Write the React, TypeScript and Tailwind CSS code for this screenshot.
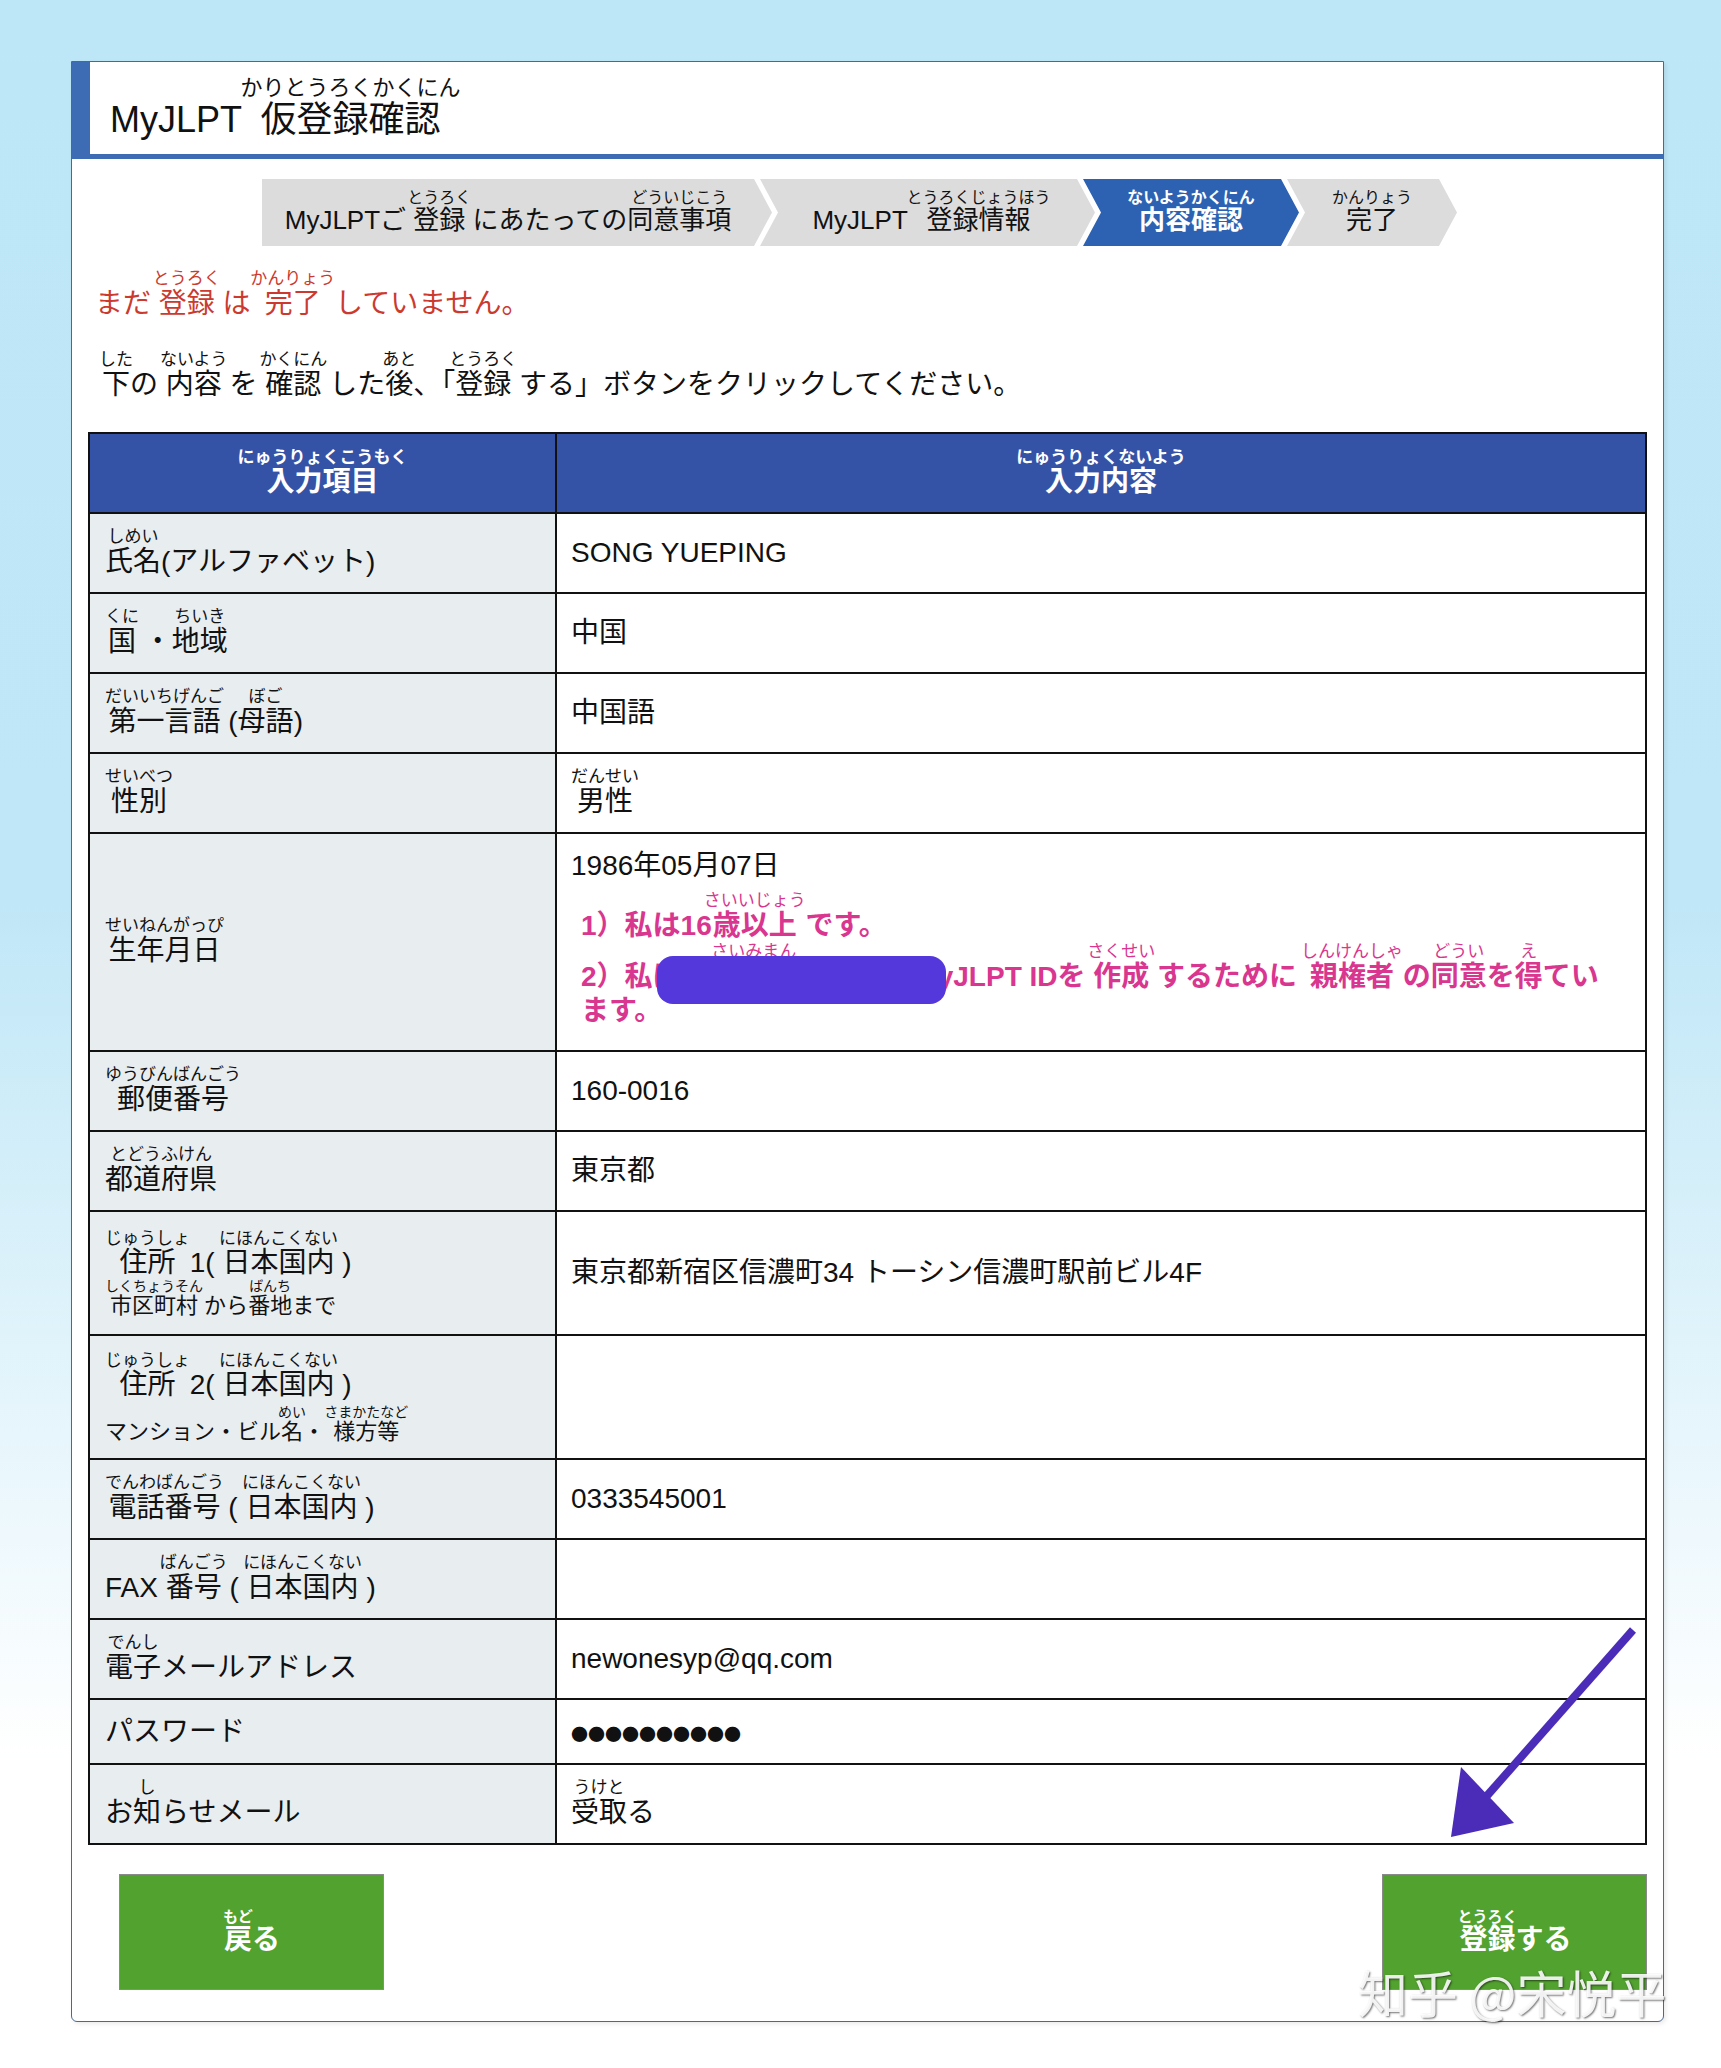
import React from 'react';

const R: React.FC<{ b: string; r: string; rc?: string }> = ({ b, r, rc }) => (
  <ruby className="[ruby-align:center]">
    <span className="inline-block">{b}</span>
    <rt className={rc ?? 'text-[17px] leading-none'}>{r}</rt>
  </ruby>
);

const LABEL = 'bg-[#e8edf0] border-2 border-[#111] pl-[15px] pr-2 align-middle text-[28px] leading-[1.2] text-[#111]';
const VALUE = 'bg-white border-2 border-[#111] pl-[14px] pr-2 align-middle text-[28px] leading-[1.2] text-[#111]';
const PR = 'text-[17px] leading-none font-normal';

const Row: React.FC<{ h: string; label: React.ReactNode; value?: React.ReactNode }> = ({ h, label, value }) => (
  <tr className={h}>
    <td className={LABEL}>{label}</td>
    <td className={VALUE}>{value}</td>
  </tr>
);

export default function App() {
  return (
    <div className="relative w-full min-h-[2068px] bg-[linear-gradient(to_bottom,#bde6f6_0px,#c0e7f7_900px,#ffffff_1760px)] font-['Liberation_Sans','Noto_Sans_CJK_JP',sans-serif] text-[#111]">
      <div className="pt-[61px] pl-[71px]">
        <div className="w-[1593px] h-[1961px] bg-white border border-[#4a6890] rounded-b-[6px] shadow-[2px_2px_4px_rgba(0,0,0,0.08)]">
          {/* title */}
          <div className="flex items-center h-[97px] border-l-[18px] border-b-[5px] border-[#3d6cb5] pl-[20px]">
            <h1 className="text-[36px] leading-[1.2] text-[#111]">
              MyJLPT <R b="仮登録確認" r="かりとうろくかくにん" rc="text-[22px] leading-none" />
            </h1>
          </div>

          {/* steps */}
          <div className="mt-[20px] ml-[190px] flex h-[67px] text-[26px] leading-[1.15]">
            <div className="w-[510px] bg-[#dcdcdc] flex items-center justify-center pr-[18px] [clip-path:polygon(0_0,calc(100%-18px)_0,100%_50%,calc(100%-18px)_100%,0_100%)]">
              <span>
                MyJLPTご <R b="登録" r="とうろく" rc="text-[16px] leading-none" /> にあたっての<R b="同意事項" r="どういじこう" rc="text-[16px] leading-none" />
              </span>
            </div>
            <div className="-ml-[12px] w-[335px] bg-[#dcdcdc] flex items-center justify-center pl-[8px] [clip-path:polygon(0_0,calc(100%-18px)_0,100%_50%,calc(100%-18px)_100%,0_100%,18px_50%)]">
              <span>
                MyJLPT <R b="登録情報" r="とうろくじょうほう" rc="text-[16px] leading-none" />
              </span>
            </div>
            <div className="-ml-[12px] w-[216px] bg-[#2d62b3] text-white font-bold flex items-center justify-center [clip-path:polygon(0_0,calc(100%-18px)_0,100%_50%,calc(100%-18px)_100%,0_100%,18px_50%)]">
              <R b="内容確認" r="ないようかくにん" rc="text-[16px] leading-none font-bold" />
            </div>
            <div className="-ml-[12px] w-[170px] bg-[#dcdcdc] flex items-center justify-center [clip-path:polygon(0_0,calc(100%-18px)_0,100%_50%,calc(100%-18px)_100%,0_100%,18px_50%)]">
              <R b="完了" r="かんりょう" rc="text-[16px] leading-none" />
            </div>
          </div>

          {/* messages */}
          <p className="ml-[23px] mt-[23px] text-[28px] leading-[1.2] text-[#cc3a2f]">
            まだ <R b="登録" r="とうろく" /> は <R b="完了" r="かんりょう" /> していません。
          </p>
          <p className="ml-[27px] mt-[29px] text-[28px] leading-[1.2]">
            <R b="下" r="した" />の <R b="内容" r="ないよう" /> を <R b="確認" r="かくにん" /> した
            <R b="後" r="あと" />、「<R b="登録" r="とうろく" /> する」ボタンをクリックしてください。
          </p>

          {/* table */}
          <table className="mt-[31px] ml-[16px] w-[1559px] border-collapse table-fixed">
            <colgroup>
              <col className="w-[467px]" />
              <col />
            </colgroup>
            <thead>
              <tr className="h-[80px]">
                <th className="bg-[#3553a6] border-2 border-[#111] text-white font-bold text-[28px] leading-[1.1]">
                  <R b="入力項目" r="にゅうりょくこうもく" rc="text-[17px] leading-none font-bold" />
                </th>
                <th className="bg-[#3553a6] border-2 border-[#111] text-white font-bold text-[28px] leading-[1.1]">
                  <R b="入力内容" r="にゅうりょくないよう" rc="text-[17px] leading-none font-bold" />
                </th>
              </tr>
            </thead>
            <tbody>
              <Row h="h-[80px]" label={<><R b="氏名" r="しめい" />(アルファベット)</>} value="SONG YUEPING" />
              <Row h="h-[80px]" label={<><R b="国" r="くに" /> ・<R b="地域" r="ちいき" /></>} value="中国" />
              <Row h="h-[80px]" label={<><R b="第一言語" r="だいいちげんご" /> (<R b="母語" r="ぼご" />)</>} value="中国語" />
              <Row h="h-[80px]" label={<R b="性別" r="せいべつ" />} value={<R b="男性" r="だんせい" />} />
              <tr className="h-[218px]">
                <td className={LABEL}>
                  <R b="生年月日" r="せいねんがっぴ" />
                </td>
                <td className={VALUE}>
                  <div className="pb-[8px]">
                    <div className="leading-[1.2]">1986年05月07日</div>
                    <div className="mt-[8px] ml-[10px] text-[#d9368f] font-bold leading-[1.2]">
                      <div>
                        1）私は16<R b="歳以上" r="さいいじょう" rc={PR} /> です。
                      </div>
                      <div>
                        2）私は16<R b="歳未満" r="さいみまん" rc={PR} /> なので、MyJLPT IDを <R b="作成" r="さくせい" rc={PR} /> するために{' '}
                        <R b="親権者" r="しんけんしゃ" rc={PR} /> の<R b="同意" r="どうい" rc={PR} />を<R b="得" r="え" rc={PR} />てい
                        <br />
                        ます。
                      </div>
                    </div>
                  </div>
                </td>
              </tr>
              <Row h="h-[80px]" label={<R b="郵便番号" r="ゆうびんばんごう" />} value="160-0016" />
              <Row h="h-[80px]" label={<R b="都道府県" r="とどうふけん" />} value="東京都" />
              <tr className="h-[124px]">
                <td className={LABEL}>
                  <div className="leading-[1.05]">
                    <R b="住所" r="じゅうしょ" /> 1( <R b="日本国内" r="にほんこくない" /> )
                  </div>
                  <div className="text-[22px] leading-[1.05]">
                    <R b="市区町村" r="しくちょうそん" rc="text-[14px] leading-none" /> から<R b="番地" r="ばんち" rc="text-[14px] leading-none" />まで
                  </div>
                </td>
                <td className={VALUE}>東京都新宿区信濃町34 トーシン信濃町駅前ビル4F</td>
              </tr>
              <tr className="h-[124px]">
                <td className={LABEL}>
                  <div className="leading-[1.05]">
                    <R b="住所" r="じゅうしょ" /> 2( <R b="日本国内" r="にほんこくない" /> )
                  </div>
                  <div className="text-[22px] leading-[1.05] mt-[4px]">
                    マンション・ビル<R b="名" r="めい" rc="text-[14px] leading-none" />・ <R b="様方等" r="さまかたなど" rc="text-[14px] leading-none" />
                  </div>
                </td>
                <td className={VALUE}></td>
              </tr>
              <Row h="h-[80px]" label={<><R b="電話番号" r="でんわばんごう" /> ( <R b="日本国内" r="にほんこくない" /> )</>} value="0333545001" />
              <Row h="h-[80px]" label={<>FAX <R b="番号" r="ばんごう" /> ( <R b="日本国内" r="にほんこくない" /> )</>} />
              <Row h="h-[80px]" label={<><R b="電子" r="でんし" />メールアドレス</>} value="newonesyp@qq.com" />
              <Row
                h="h-[65px]"
                label="パスワード"
                value={<span className="font-['Noto_Sans_CJK_JP',sans-serif] text-[17px]">●●●●●●●●●●</span>}
              />
              <Row h="h-[80px]" label={<>お<R b="知" r="し" />らせメール</>} value={<><R b="受取" r="うけと" />る</>} />
            </tbody>
          </table>

          {/* buttons */}
          <div className="mt-[29px] flex justify-between pl-[47px] pr-[16px]">
            <button className="w-[265px] h-[116px] bg-[#52a22f] border border-[#8a8a8a] text-white font-bold text-[28px] leading-[1.1]">
              <R b="戻" r="もど" rc="text-[15px] leading-none font-bold" />る
            </button>
            <button className="w-[265px] h-[116px] bg-[#52a22f] border border-[#8a8a8a] text-white font-bold text-[28px] leading-[1.1]">
              <R b="登録" r="とうろく" rc="text-[15px] leading-none font-bold" />する
            </button>
          </div>
        </div>
      </div>

      {/* redaction */}
      <div className="absolute left-[657px] top-[956px] w-[289px] h-[48px] rounded-[16px] bg-[#5538db]" />

      {/* arrow */}
      <svg className="absolute left-[1440px] top-[1620px]" width="210" height="230" viewBox="0 0 210 230">
        <line x1="193" y1="10" x2="45" y2="178" stroke="#4a2cb8" strokeWidth="8" />
        <polygon points="11,217 21,147 74,203" fill="#4a2cb8" />
      </svg>

      {/* watermark */}
      <div className="absolute left-[1358px] top-[1966px] text-[50px] leading-none text-white/90 font-['Noto_Sans_CJK_SC',sans-serif] [text-shadow:1px_1px_2px_rgba(0,0,0,0.55)]">
        知乎 @宋悦平
      </div>
    </div>
  );
}
